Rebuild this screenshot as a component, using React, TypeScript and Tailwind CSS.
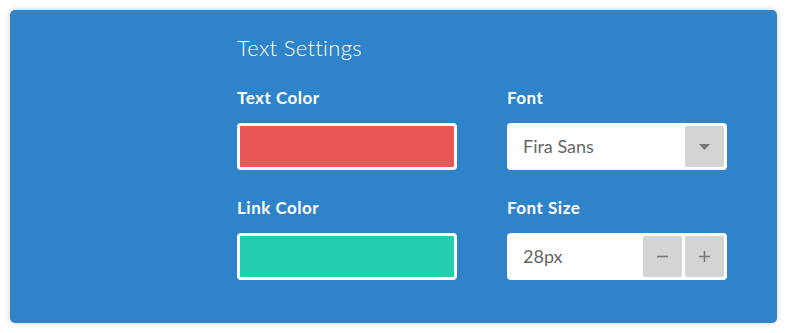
function ColorField({ label, color }: { label: string; color: string }) {
  return (
    <div className="flex flex-col">
      <div className="text-[17px] leading-[20px] font-bold tracking-[0.5px] text-white">{label}</div>
      <div className={`mt-[15px] h-[47px] w-[220px] rounded-[4px] border-[3px] border-white ${color}`} />
    </div>
  );
}

export default function App() {
  return (
    <div className="w-[787px] h-[333px] bg-white p-[10px] font-['Lato','Liberation_Sans',sans-serif]">
      <div className="h-[313px] w-[767px] rounded-[5px] bg-[#2f83c9] pl-[227px] pt-[25px] shadow-[0_0_6px_rgba(0,0,0,0.18)]">
        <div className="text-[22px] leading-[26px] font-light tracking-[0.3px] text-white">Text Settings</div>

        <div className="mt-[27px] grid grid-cols-[220px_220px] gap-x-[50px] gap-y-[28px]">
          <ColorField label="Text Color" color="bg-[#e95858]" />

          <div className="flex flex-col">
            <div className="text-[17px] leading-[20px] font-bold tracking-[0.5px] text-white">Font</div>
            <div className="mt-[15px] flex h-[47px] w-[220px] items-stretch rounded-[4px] bg-white p-[3px]">
              <div className="flex flex-1 items-center pl-[13px] text-[18px] text-[#666]">Fira Sans</div>
              <div className="flex w-[39px] items-center justify-center rounded-[2px] bg-[#d4d4d4]">
                <svg width="11" height="6" viewBox="0 0 11 6">
                  <path d="M0 0 H11 L5.5 6 Z" fill="#777" />
                </svg>
              </div>
            </div>
          </div>

          <ColorField label="Link Color" color="bg-[#24cdab]" />

          <div className="flex flex-col">
            <div className="text-[17px] leading-[20px] font-bold tracking-[0.5px] text-white">Font Size</div>
            <div className="mt-[15px] flex h-[47px] w-[220px] items-stretch gap-[3px] rounded-[4px] bg-white p-[3px]">
              <div className="flex flex-1 items-center pl-[13px] text-[18px] text-[#666]">28px</div>
              <div className="flex w-[39px] items-center justify-center rounded-[2px] bg-[#d4d4d4]">
                <svg width="13" height="13" viewBox="0 0 13 13">
                  <path d="M1 6.5 H12" stroke="#777" strokeWidth="1.6" />
                </svg>
              </div>
              <div className="flex w-[39px] items-center justify-center rounded-[2px] bg-[#d4d4d4]">
                <svg width="13" height="13" viewBox="0 0 13 13">
                  <path d="M1 6.5 H12 M6.5 1 V12" stroke="#777" strokeWidth="1.6" />
                </svg>
              </div>
            </div>
          </div>
        </div>
      </div>
    </div>
  );
}
